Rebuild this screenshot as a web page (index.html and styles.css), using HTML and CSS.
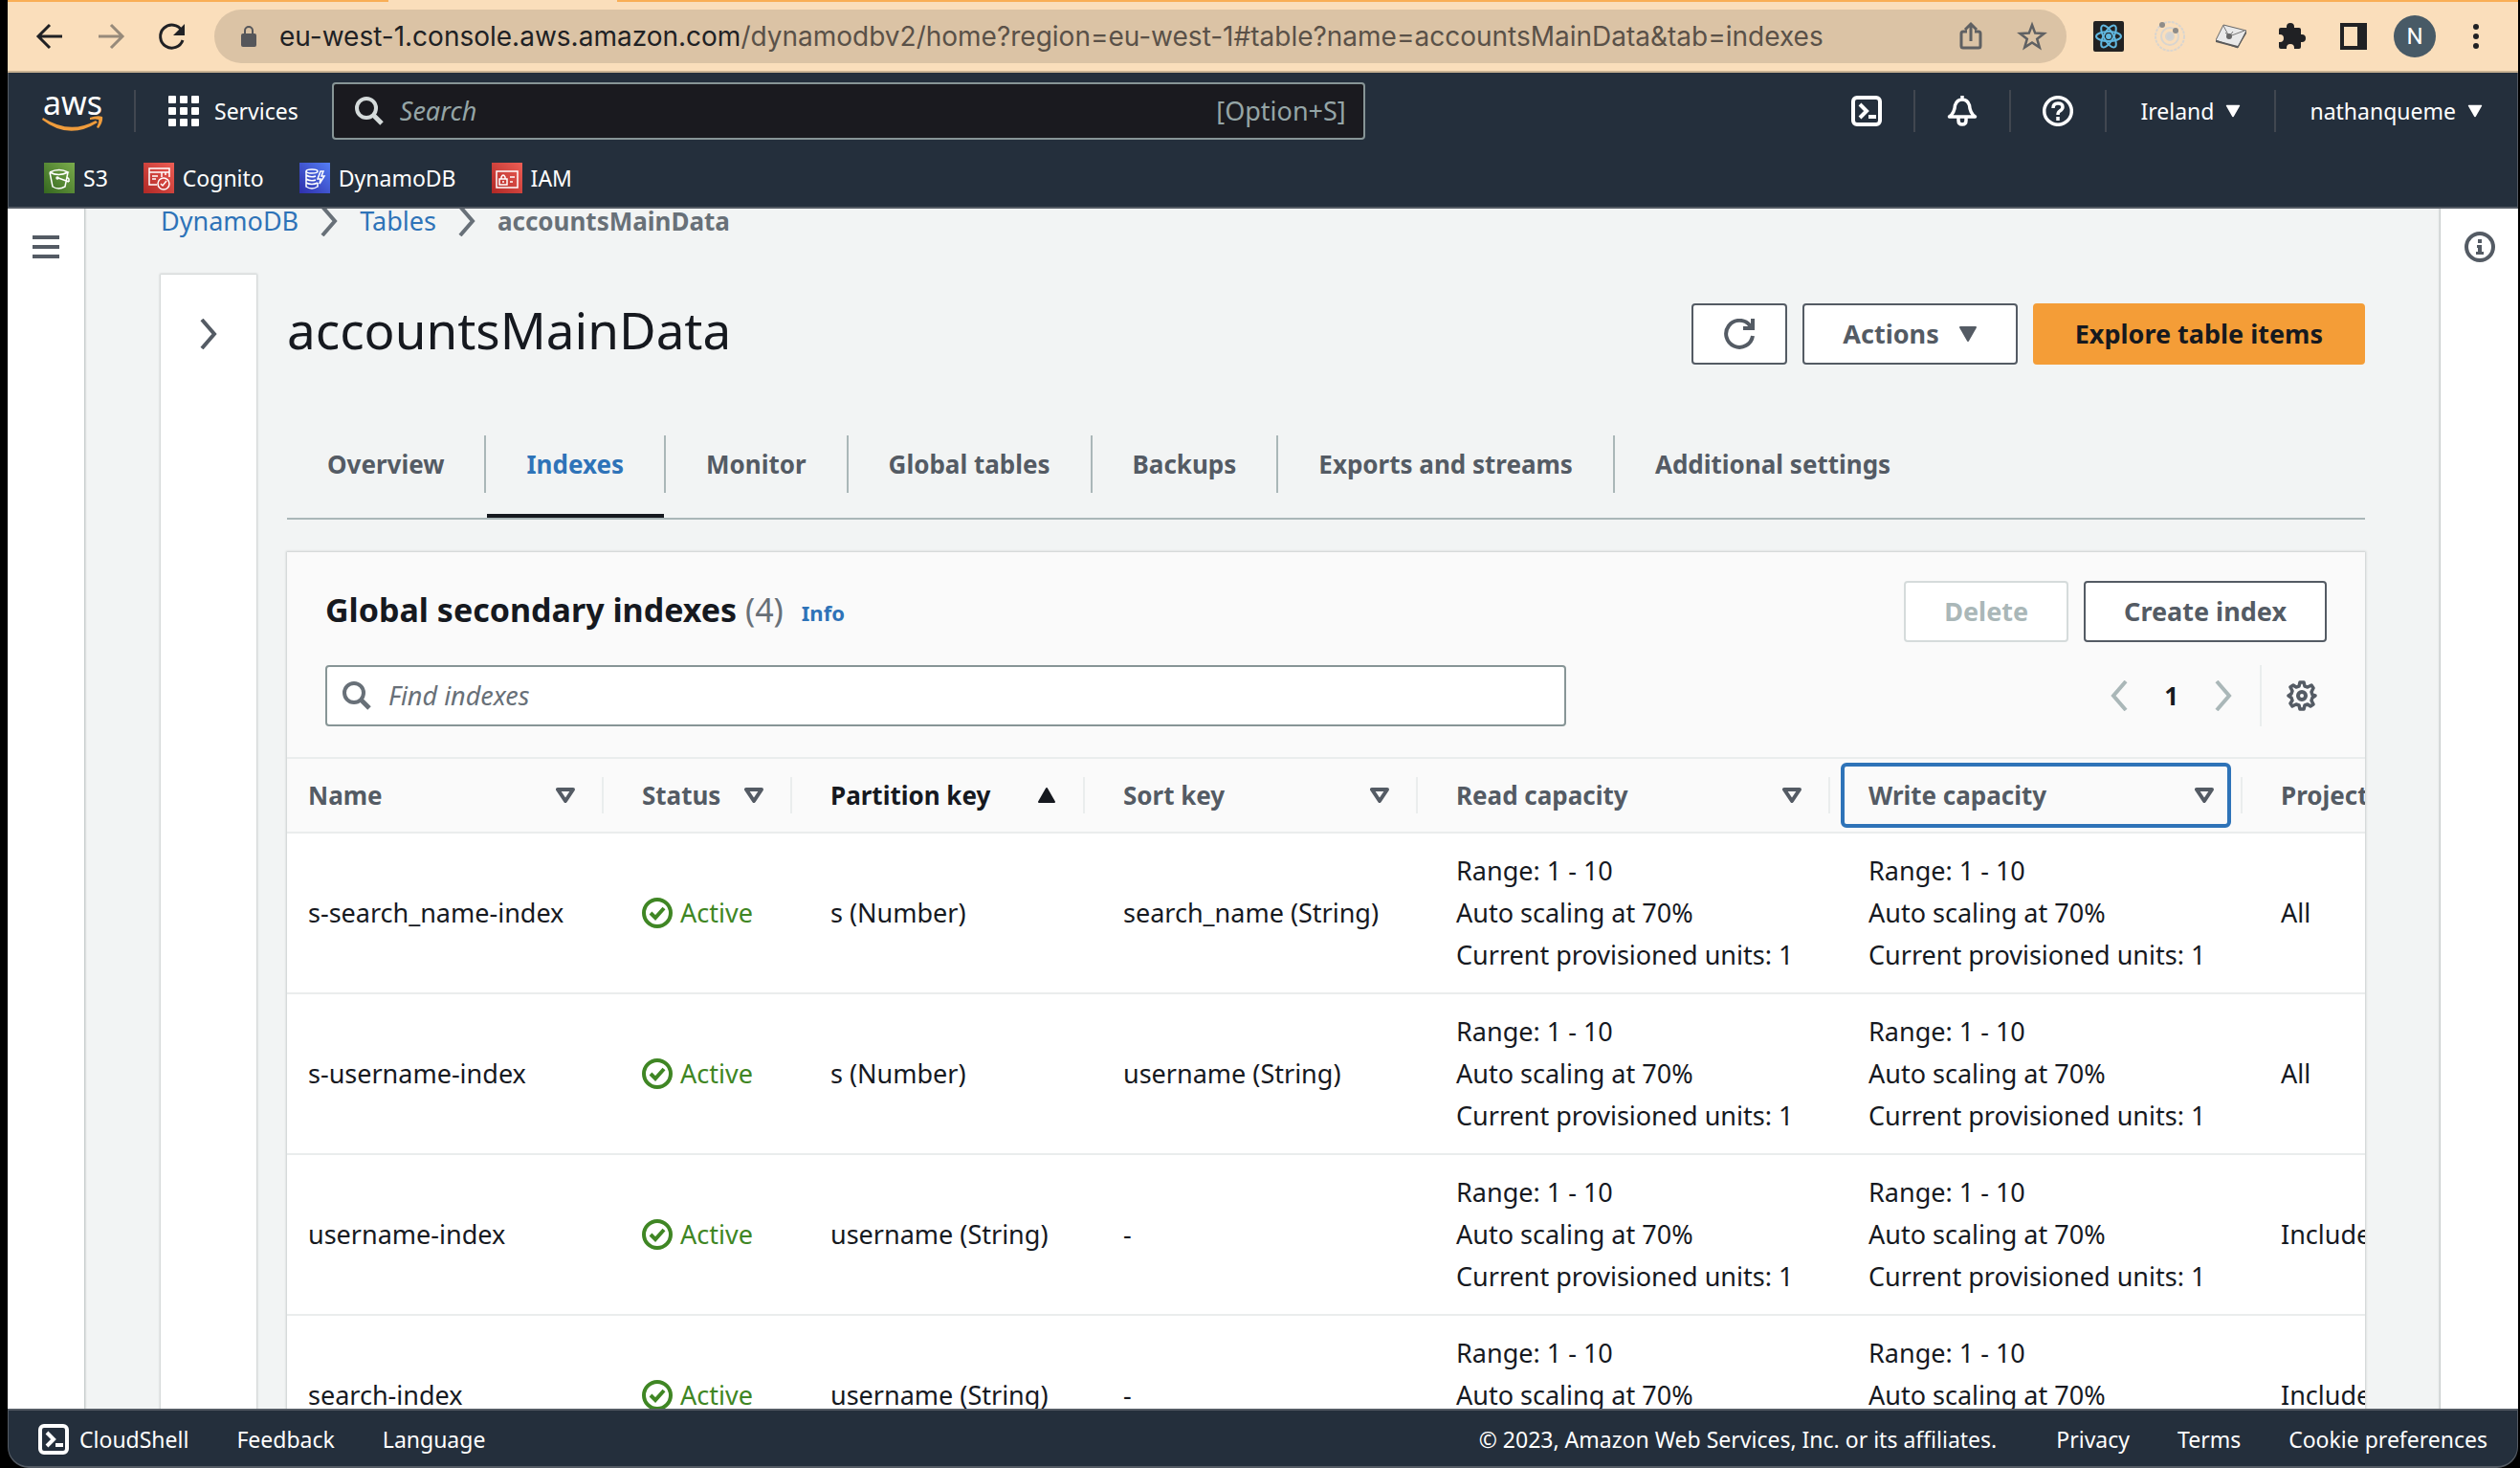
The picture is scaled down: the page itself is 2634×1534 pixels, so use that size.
FILE: index.html
```html
<!DOCTYPE html>
<html lang="en">
<head>
<meta charset="utf-8">
<title>accountsMainData</title>
<link rel="stylesheet" href="styles.css">
</head>
<body>
<svg class="defs" aria-hidden="true">
  <symbol id="chevron" viewBox="0 0 20 32"><path d="M3 1l13 15L3 31" fill="none" stroke="currentColor" stroke-width="4"/></symbol>
  <symbol id="caret" viewBox="0 0 20 16"><path d="M2 1h16L10 15z" fill="currentColor" stroke="currentColor" stroke-width="2" stroke-linejoin="round"/></symbol>
  <symbol id="sort" viewBox="0 0 20 16"><path d="M2 2h16L10 14z" fill="none" stroke="currentColor" stroke-width="4" stroke-linejoin="round"/></symbol>
  <symbol id="sorted" viewBox="0 0 20 16"><path d="M2 15h16L10 1z" fill="currentColor" stroke="currentColor" stroke-width="2" stroke-linejoin="round"/></symbol>
  <symbol id="search" viewBox="0 0 32 32"><circle cx="14" cy="13" r="10" fill="none" stroke="currentColor" stroke-width="4"/><path d="M21 20l9 9" stroke="currentColor" stroke-width="5"/></symbol>
  <symbol id="shell" viewBox="0 0 32 32"><rect x="2" y="2" width="28" height="28" rx="4" fill="none" stroke="currentColor" stroke-width="4"/><path d="M9 9l7 7-7 7" fill="none" stroke="currentColor" stroke-width="4"/><path d="M18 22h8" stroke="currentColor" stroke-width="4"/></symbol>
  <symbol id="ok" viewBox="0 0 32 32"><circle cx="16" cy="16" r="14" fill="none" stroke="currentColor" stroke-width="4"/><path d="M9 16l5 5 9-10" fill="none" stroke="currentColor" stroke-width="4"/></symbol>
</svg>

<div class="tabstrip"></div>
<nav class="toolbar" aria-label="Browser">
  <button class="tool" aria-label="Back"><svg width="32" height="32" viewBox="0 0 32 32" fill="none" stroke="#202124" stroke-width="3"><path d="M29 16H5M16 4L4 16l12 12"/></svg></button>
  <button class="tool" aria-label="Forward"><svg width="32" height="32" viewBox="0 0 32 32" fill="none" stroke="#978a7a" stroke-width="3"><path d="M3 16h24M16 4l12 12-12 12"/></svg></button>
  <button class="tool" aria-label="Reload"><svg width="32" height="32" viewBox="0 0 32 32"><path d="M27 20a12 12 0 1 1-1-10" fill="none" stroke="#202124" stroke-width="3"/><path d="M29 3v12H17z" fill="#202124"/></svg></button>
  <div class="address">
    <svg width="16" height="22" viewBox="0 0 16 22"><rect y="8" width="16" height="14" rx="2" fill="#55565a"/><path d="M4 9V5a4 4 0 0 1 8 0v4" fill="none" stroke="#55565a" stroke-width="2"/></svg>
    <span class="url">eu-west-1.console.aws.amazon.com<span class="path">/dynamodbv2/home?region=eu-west-1#table?name=accountsMainData&amp;tab=indexes</span></span>
    <button class="tool" aria-label="Share"><svg width="32" height="32" viewBox="0 0 32 32" fill="none" stroke="#5f6062" stroke-width="3"><path d="M12 11H8q-2 0-2 2v13q0 2 2 2h16q2 0 2-2V13q0-2-2-2h-4M16 21V4M10 9l6-6 6 6"/></svg></button>
    <button class="tool" aria-label="Bookmark"><svg width="32" height="32" viewBox="0 0 32 32" fill="none" stroke="#5f6062" stroke-width="2.5"><path d="M16 4l3.2 8.6 9.3.4-7.3 5.7 2.6 8.9-7.8-5.1-7.8 5.1 2.6-8.9L3.500 13l9.300-.4z"/></svg></button>
  </div>
  <button class="tool" aria-label="React tools"><svg width="32" height="32" viewBox="0 0 32 32" fill="none" stroke="#61b8e0" stroke-width="2"><rect width="32" height="32" rx="2" fill="#222" stroke="none"/><ellipse cx="16" cy="16" rx="13" ry="5"/><ellipse cx="16" cy="16" rx="13" ry="5" transform="rotate(60 16 16)"/><ellipse cx="16" cy="16" rx="13" ry="5" transform="rotate(120 16 16)"/><circle cx="16" cy="16" r="2" fill="#61b8e0"/></svg></button>
  <button class="tool" aria-label="Orbit"><svg width="32" height="32" viewBox="0 0 32 32" fill="none" stroke="#d9d5cf" stroke-width="2"><circle cx="16" cy="16" r="15" stroke-dasharray="3 1"/><circle cx="16" cy="16" r="9"/><circle cx="16" cy="16" r="4" fill="#d3d3d3"/><circle cx="8" cy="4" r="3" fill="#8e8c89" stroke="none"/><circle cx="22" cy="10" r="3" fill="#8e8c89" stroke="none"/></svg></button>
  <button class="tool" aria-label="Map"><svg width="32" height="32" viewBox="0 0 32 32"><path d="M8 4l24 6-9 18L0 20z" fill="#e9e9e9" stroke="#666" stroke-width="1"/><path d="M0 20l23 6 9-16v3l-9 15L0 22z" fill="#5b5b5b"/><path d="M8 5l6 11 16-6M10 12l4 4 4-5" fill="none" stroke="#777"/><circle cx="14" cy="16" r="3" fill="#666"/></svg></button>
  <button class="tool" aria-label="Extensions"><svg width="32" height="32" viewBox="0 0 32 32"><path d="M10 6a4 4 0 0 1 8 0v1h5q2 0 2 2v5h1a4 4 0 0 1 0 8h-1v5q0 2-2 2h-5v-1a4 4 0 0 0-8 0v1H4q-2 0-2-2v-5h1a4 4 0 0 0 0-8H2V9q0-2 2-2h6z" fill="#202124"/></svg></button>
  <button class="tool" aria-label="Side panel"><svg width="28" height="28" viewBox="0 0 28 28"><path d="M0 0h28v28H0zM4 4v20h14V4z" fill="#202124" fill-rule="evenodd"/></svg></button>
  <button class="tool" aria-label="Profile"><span class="avatar">N</span></button>
  <button class="tool" aria-label="Menu"><svg width="8" height="28" viewBox="0 0 8 28" fill="#202124"><circle cx="4" cy="4" r="3"/><circle cx="4" cy="14" r="3"/><circle cx="4" cy="24" r="3"/></svg></button>
</nav>

<header class="header">
  <div class="header-main">
    <a class="logo" href="#">aws<svg width="64" height="18" viewBox="0 0 64 18"><path d="M1 2q28 18 55 3l2 2Q28 26 0 4z" fill="#ef9c3c"/><path d="M50 2q8-3 13-1 1 5-4 12l-2-1q3-6 2-8-3-1-9 0z" fill="#ef9c3c"/></svg></a>
    <button class="services"><svg width="32" height="32" viewBox="0 0 32 32" fill="#fff"><rect width="8" height="8" rx="1"/><rect x="12" width="8" height="8" rx="1"/><rect x="24" width="8" height="8" rx="1"/><rect y="12" width="8" height="8" rx="1"/><rect x="12" y="12" width="8" height="8" rx="1"/><rect x="24" y="12" width="8" height="8" rx="1"/><rect y="24" width="8" height="8" rx="1"/><rect x="12" y="24" width="8" height="8" rx="1"/><rect x="24" y="24" width="8" height="8" rx="1"/></svg>Services</button>
    <label class="global-search"><svg width="32" height="32"><use href="#search"/></svg><input type="text" placeholder="Search" aria-label="Search"><span>[Option+S]</span></label>
    <div class="account">
      <button class="icon-item" aria-label="CloudShell"><svg width="32" height="32"><use href="#shell"/></svg></button>
      <button class="icon-item" aria-label="Notifications"><svg width="32" height="32" viewBox="0 0 32 32" fill="none" stroke="#fff" stroke-width="3.500" stroke-linejoin="round"><path d="M16 0v4M2.500 22q5.500-4 6-12 2-6 7.500-6t7.500 6q.5 8 6 12zM12 23v3q0 4 4 4t4-4v-3"/></svg></button>
      <button class="icon-item" aria-label="Help"><svg width="32" height="32" viewBox="0 0 32 32" fill="none" stroke="#fff"><circle cx="16" cy="16" r="14.300" stroke-width="3.500"/><path d="M11 13q0-5 5-5t5 4q0 2-3 4-2 1-2 4M16 22v4" stroke-width="3.500"/></svg></button>
      <button class="menu-item">Ireland<svg width="16" height="14" viewBox="0 0 20 16"><use href="#caret"/></svg></button>
      <button class="menu-item">nathanqueme<svg width="16" height="14" viewBox="0 0 20 16"><use href="#caret"/></svg></button>
    </div>
  </div>
  <nav class="favorites" aria-label="Favorites">
    <a href="#"><svg class="s3" viewBox="0 0 32 32"><path d="M6 10l3 15q6 4 13 0l3-15M6 10q9 5 19 0-9-5-19 0M15 16l11 4M26 20v-3l-2-2"/><circle cx="14" cy="16" r="1"/></svg>S3</a>
    <a href="#"><svg class="red" viewBox="0 0 32 32"><path d="M14 23H6V6h21v9M6 10h21M9 14h6M9 17h4M19 10v5M23 10v3"/><circle cx="21" cy="22" r="6"/><path d="M18 22l2 2 4-5"/></svg>Cognito</a>
    <a href="#"><svg class="blue" viewBox="0 0 32 32"><ellipse cx="13" cy="9" rx="6" ry="2"/><path d="M7 9v16q6 4 12 0v-4M7 13q5 3 10 1M7 17q5 3 10 1M7 21q6 3 12 0M22 9l-3 8h3l-1 5 5-8h-3l2-5z"/></svg>DynamoDB</a>
    <a href="#"><svg class="red" viewBox="0 0 32 32"><path d="M5 9h22v17H5zM8 17h8v6H8zM10 17v-2q2-4 4 0v2M12 19v2M19 15h5M19 20h3"/></svg>IAM</a>
  </nav>
</header>

<div class="body">
  <aside class="rail"><button class="bare" aria-label="Open navigation"><svg width="28" height="24" viewBox="0 0 28 24" fill="#545b64"><path d="M0 0h28v4H0zM0 10h28v4H0zM0 20h28v4H0z"/></svg></button></aside>

  <main class="main">
    <nav class="crumbs" aria-label="Breadcrumb">
      <a href="#">DynamoDB</a><svg width="20" height="32"><use href="#chevron"/></svg><a href="#">Tables</a><svg width="20" height="32"><use href="#chevron"/></svg><span>accountsMainData</span>
    </nav>
    <div class="columns">
      <aside class="drawer"><button class="bare" aria-label="Expand tables"><svg width="20" height="32"><use href="#chevron"/></svg></button></aside>
      <section class="content">
        <div class="title-row">
          <h1>accountsMainData</h1>
          <button class="btn refresh" aria-label="Refresh"><svg width="32" height="32" viewBox="0 0 32 32" fill="none" stroke="currentColor" stroke-width="4"><path d="M30 18a14 14 0 1 1-3-11l2 3M30 0v10H20"/></svg></button>
          <button class="btn">Actions<svg width="20" height="16"><use href="#caret"/></svg></button>
          <button class="btn primary">Explore table items</button>
        </div>
        <nav class="tabs" aria-label="Table sections">
          <a href="#">Overview</a><a href="#" class="active" aria-current="page">Indexes</a><a href="#">Monitor</a><a href="#">Global tables</a><a href="#">Backups</a><a href="#">Exports and streams</a><a href="#">Additional settings</a>
        </nav>
        <section class="panel">
          <div class="panel-head">
            <div class="panel-row">
              <h2>Global secondary indexes <span>(4)</span></h2><a class="info" href="#">Info</a>
              <div class="panel-actions"><button class="btn" disabled>Delete</button><button class="btn">Create index</button></div>
            </div>
            <div class="panel-row">
              <label class="find"><svg width="32" height="32"><use href="#search"/></svg><input type="text" placeholder="Find indexes" aria-label="Find indexes"></label>
              <div class="pager">
                <button class="bare dim" aria-label="Previous page"><svg class="flip" width="20" height="32"><use href="#chevron"/></svg></button>
                <b>1</b>
                <button class="bare dim" aria-label="Next page"><svg width="20" height="32"><use href="#chevron"/></svg></button>
                <button class="settings" aria-label="Preferences"><svg width="32" height="32" viewBox="0 0 32 32" fill="none" stroke="currentColor" stroke-width="4" stroke-linejoin="round"><path d="M14 2h4l1 4 3 1 4-2 2 3-2 4 1 3 3 1-3 2-1 3 2 4-3 2-3-2-3 1-1 4h-4l-1-4-3-1-4 2-2-3 2-3-1-3-3-2 3-2 1-3-2-4 3-2 3 2 3-1z" stroke-width="3.500"/><circle cx="16" cy="16" r="4"/></svg></button>
              </div>
            </div>
          </div>
          <table class="grid">
            <colgroup><col class="c-name"><col class="c-status"><col class="c-part"><col class="c-sort"><col class="c-cap"><col class="c-cap"><col class="c-proj"></colgroup>
            <thead><tr>
              <th><button>Name<svg width="20" height="16"><use href="#sort"/></svg></button></th>
              <th><button>Status<svg width="20" height="16"><use href="#sort"/></svg></button></th>
              <th class="sorted"><button>Partition key<svg width="20" height="16"><use href="#sorted"/></svg></button></th>
              <th><button>Sort key<svg width="20" height="16"><use href="#sort"/></svg></button></th>
              <th><button>Read capacity<svg width="20" height="16"><use href="#sort"/></svg></button></th>
              <th><button class="focused">Write capacity<svg width="20" height="16"><use href="#sort"/></svg></button></th>
              <th><button>Project</button></th>
            </tr></thead>
            <tbody>
              <tr><td>s-search_name-index</td><td><span class="status"><svg width="32" height="32"><use href="#ok"/></svg>Active</span></td><td>s (Number)</td><td>search_name (String)</td><td>Range: 1 - 10<br>Auto scaling at 70%<br>Current provisioned units: 1</td><td>Range: 1 - 10<br>Auto scaling at 70%<br>Current provisioned units: 1</td><td>All</td></tr>
              <tr><td>s-username-index</td><td><span class="status"><svg width="32" height="32"><use href="#ok"/></svg>Active</span></td><td>s (Number)</td><td>username (String)</td><td>Range: 1 - 10<br>Auto scaling at 70%<br>Current provisioned units: 1</td><td>Range: 1 - 10<br>Auto scaling at 70%<br>Current provisioned units: 1</td><td>All</td></tr>
              <tr><td>username-index</td><td><span class="status"><svg width="32" height="32"><use href="#ok"/></svg>Active</span></td><td>username (String)</td><td>-</td><td>Range: 1 - 10<br>Auto scaling at 70%<br>Current provisioned units: 1</td><td>Range: 1 - 10<br>Auto scaling at 70%<br>Current provisioned units: 1</td><td>Include</td></tr>
              <tr><td>search-index</td><td><span class="status"><svg width="32" height="32"><use href="#ok"/></svg>Active</span></td><td>username (String)</td><td>-</td><td>Range: 1 - 10<br>Auto scaling at 70%</td><td>Range: 1 - 10<br>Auto scaling at 70%</td><td>Include</td></tr>
            </tbody>
          </table>
        </section>
      </section>
    </div>
  </main>

  <aside class="rail right"><button class="bare" aria-label="Info panel"><svg width="32" height="32" viewBox="0 0 32 32"><circle cx="16" cy="16" r="14" fill="none" stroke="#545b64" stroke-width="4"/><path d="M14 8h4v4h-4zM13 14h5v7h2v3h-8v-3h2v-4h-1z" fill="#545b64"/></svg></button></aside>
</div>

<footer class="footer">
  <a class="shell" href="#"><svg width="32" height="32"><use href="#shell"/></svg>CloudShell</a>
  <a href="#">Feedback</a>
  <a href="#">Language</a>
  <span class="copyright">© 2023, Amazon Web Services, Inc. or its affiliates.</span>
  <a href="#">Privacy</a>
  <a href="#">Terms</a>
  <a href="#">Cookie preferences</a>
</footer>
</body>
</html>
```
FILE: styles.css
```css
* { box-sizing: border-box; }
body {
  margin: 0;
  padding: 0 2px 0 8px;
  height: 100vh;
  display: flex;
  flex-direction: column;
  overflow: hidden;
  background: #000;
  color: #16191f;
  font: 27px/44px "Noto Sans", "Open Sans", sans-serif;
}
button, input { font: inherit; color: inherit; margin: 0; padding: 0; border: 0; background: none; }
input { flex: 1; min-width: 0; outline: 0; }
a { color: #2e73b8; text-decoration: none; }
svg { display: block; flex: none; }
.defs { position: absolute; width: 0; height: 0; }

/* Browser chrome */
.tabstrip { flex: none; height: 2px; background: linear-gradient(90deg, #f9ae56 0 398px, #fadebb 398px 637px, #f9ae56 637px); }
.toolbar {
  flex: none;
  display: flex;
  align-items: center;
  padding: 8px 12px;
  background: #fadebb;
  border-bottom: 2px solid #c8b293;
}
.tool { flex: none; width: 64px; display: flex; align-items: center; justify-content: center; }
.address {
  flex: 1;
  min-width: 0;
  height: 56px;
  margin: 0 12px;
  padding: 0 4px 0 28px;
  display: flex;
  align-items: center;
  gap: 24px;
  border-radius: 28px;
  background: #dbc3a5;
}
.address .tool + .tool { margin-left: -24px; }
.url { flex: 1; font: 28px/36px Inter, sans-serif; color: #202124; white-space: nowrap; }
.path { color: #5a5148; }
.avatar { width: 44px; height: 44px; border-radius: 22px; background: #485a66; color: #fff; font: 24px/44px Roboto, sans-serif; }

/* Console header */
.header { flex: none; background: #242f3c; border: solid #545b64; border-width: 0 1px 2px; color: #fff; font-size: 23px; }
.header-main { display: flex; align-items: center; height: 80px; }
.logo { color: #fff; font-size: 34px; line-height: 28px; font-weight: 400; width: 64px; margin-left: 35px; text-align: center; }
.services { display: flex; align-items: center; gap: 16px; height: 44px; margin: 0 35px 0 32px; padding-left: 34px; border-left: 2px solid #414750; }
.global-search {
  width: 1080px;
  height: 60px;
  padding: 0 18px 0 20px;
  display: flex;
  align-items: center;
  gap: 17px;
  background: #1a1a1f;
  border: 2px solid #879596;
  border-radius: 4px;
  color: #95a5a6;
  font-size: 27px;
}
.global-search svg { color: #d5dbdb; }
input::placeholder { color: inherit; opacity: 1; font-style: italic; }
.account { display: flex; margin-left: auto; padding-right: 1px; }
.account button { height: 44px; display: flex; align-items: center; justify-content: center; border-right: 2px solid #414750; }
.account button:last-child { border: 0; }
.icon-item { width: 100px; }
.menu-item { padding: 0 35px; gap: 12px; }
.favorites { display: flex; align-items: center; gap: 37px; height: 60px; padding-left: 37px; }
.favorites a { display: flex; align-items: center; gap: 9px; color: #fff; }
.favorites svg { width: 32px; height: 32px; fill: none; stroke: #fff; stroke-width: 1.5; }
.s3 { background: linear-gradient(45deg, #35671f, #7aac4c); }
.red { background: linear-gradient(45deg, #b02825, #ee5e55); }
.blue { background: linear-gradient(45deg, #2e2eaa, #547ef5); }

/* Page body */
.body { flex: 1; min-height: 0; display: flex; background: #f2f4f4; overflow: hidden; }
.rail { flex: none; width: 80px; padding-top: 28px; display: flex; justify-content: center; align-items: flex-start; background: #fff; box-shadow: 0 0 2px 1px #b5bbbb; z-index: 1; }
.rail.right { width: 81px; padding-top: 24px; }
.bare { display: flex; color: #545b64; }
.main { flex: 1; min-width: 0; padding: 0 79px 0 80px; display: flex; flex-direction: column; overflow: hidden; }
.crumbs { flex: none; display: flex; align-items: center; gap: 22px; height: 26px; line-height: 26px; color: #687078; }
.crumbs span { font-size: 26px; font-weight: 700; }
.columns { flex: 1; display: flex; gap: 32px; padding-top: 43px; }
.drawer { flex: none; width: 100px; padding-top: 46px; display: flex; justify-content: center; align-items: flex-start; background: #fff; box-shadow: 0 0 2px 1px #c9cece; }
.content { flex: 1; min-width: 0; }
.title-row { display: flex; align-items: center; gap: 16px; padding-top: 30px; }
h1 { flex: 1; margin: 0; font-size: 53px; line-height: 64px; font-weight: 400; margin-top: -8px; }
.btn {
  height: 64px;
  padding: 0 40px;
  display: flex;
  align-items: center;
  gap: 20px;
  background: #fff;
  border: 2px solid #545b64;
  border-radius: 4px;
  color: #545b64;
  font-weight: 700;
  white-space: nowrap;
}
.refresh { padding: 0 32px; }
.primary { padding: 0 42px; background: #f49d37; border-color: #f49d37; color: #16191f; }
.btn:disabled { color: #aab7b8; border-color: #d5dbdb; }
.tabs { display: flex; height: 88px; margin-top: 74px; border-bottom: 2px solid #aab7b8; font-size: 26px; line-height: 60px; font-weight: 700; }
.tabs a { position: relative; height: 60px; padding: 0 42px; border-right: 2px solid #aab7b8; color: #545b64; white-space: nowrap; }
.tabs a:last-child { border: 0; }
.tabs .active { color: #2e73b8; }
.tabs .active::after { content: ""; position: absolute; left: 1px; right: 0; bottom: -26px; height: 4px; background: #16191f; }

/* Indexes panel */
.panel { margin-top: 34px; background: #fff; box-shadow: 0 0 2px 1px #c9cece; overflow: hidden; }
.panel-head { padding: 30px 40px 32px; display: flex; flex-direction: column; gap: 24px; background: #fafafa; border-bottom: 2px solid #eaeded; }
.panel-row { display: flex; align-items: center; }
h2 { margin: 0; padding-bottom: 4px; font-size: 34px; line-height: 44px; font-weight: 700; }
h2 span { font-weight: 400; color: #687078; }
.info { margin: 2px 0 0 19px; font-size: 22px; font-weight: 700; }
.panel-actions { display: flex; gap: 16px; margin-left: auto; }
.find { width: 62%; height: 64px; padding: 0 14px; display: flex; align-items: center; gap: 18px; background: #fff; border: 2px solid #879596; border-radius: 4px; color: #687078; }
.pager { display: flex; align-items: center; gap: 37px; margin-left: auto; }
.pager b { font-size: 26px; }
.dim { color: #aab7b8; }
.flip { transform: scaleX(-1); }
.settings { height: 64px; margin-left: -9px; padding: 0 10px 0 26px; border-left: 2px solid #eaeded; color: #545b64; }
.grid { width: 2344px; table-layout: fixed; border-collapse: collapse; }
.c-name { width: 331px; }
.c-status { width: 197px; }
.c-part { width: 306px; }
.c-sort { width: 348px; }
.c-cap { width: 431px; }
.grid thead tr { height: 77px; background: #fafafa; border-bottom: 2px solid #eaeded; }
.grid th {
  padding: 0 12px 0 11px;
  background: linear-gradient(#eaeded, #eaeded) right center / 2px 38px no-repeat;
  color: #545b64;
  font-size: 26px;
}
.grid th button { width: 100%; height: 68px; padding: 0 14px 0 25px; display: flex; align-items: center; justify-content: space-between; border: 4px solid transparent; border-radius: 6px; font-weight: 700; white-space: nowrap; }
.grid th.sorted { color: #16191f; }
.grid th:first-child button { padding-left: 7px; }
.grid th .focused { border-color: #2e73b8; }
.grid td { padding: 17px 0 17px 40px; white-space: nowrap; }
.grid td:first-child { padding-left: 22px; }
.grid tbody tr { height: 168px; border-bottom: 2px solid #eaeded; }
.grid tbody tr:last-child td { vertical-align: top; }
.grid tbody tr:last-child td:nth-child(-n+4), .grid tbody tr:last-child td:last-child { vertical-align: middle; }
.status { display: flex; align-items: center; gap: 8px; color: #3f8624; }

/* Footer */
.footer {
  flex: none;
  height: 62px;
  padding: 2px 31px 0;
  display: flex;
  align-items: center;
  gap: 50px;
  background: #242f3c;
  border: solid #545b64;
  border-width: 2px 1px;
  border-radius: 0 0 22px 22px;
  color: #fff;
  font-size: 23px;
  white-space: nowrap;
  z-index: 1;
}
.footer a { color: #fff; }
.footer .shell { display: flex; align-items: center; gap: 11px; }
.copyright { margin: 0 12px 0 auto; }
```
